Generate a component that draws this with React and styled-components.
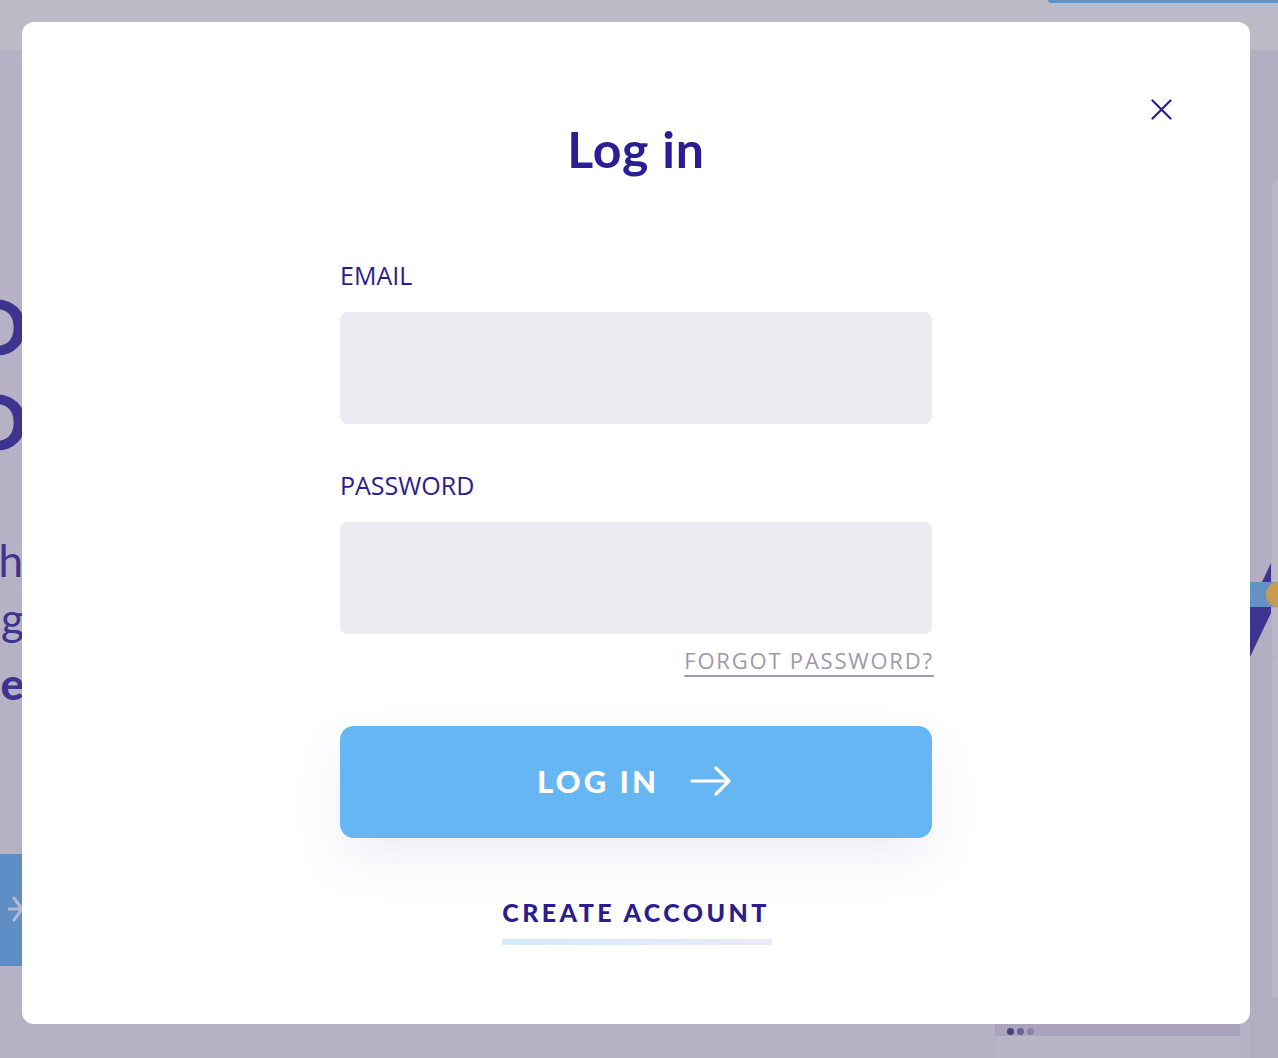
import React from 'react';
import styled, { createGlobalStyle } from 'styled-components';

const GlobalStyle = createGlobalStyle`
  html, body { margin: 0; padding: 0; }
  body {
    width: 1278px;
    height: 1058px;
    overflow: hidden;
    background: #b6b1c4;
    font-family: 'Open Sans', 'Noto Sans', sans-serif;
  }
  * { box-sizing: border-box; }
`;

const Page = styled.div`
  width: 1278px;
  height: 1058px;
  display: flex;
  flex-direction: column;
  background: #b6b1c4;
`;

const Header = styled.header`
  height: 50px;
  flex: none;
  background: #bebbc9;
  display: flex;
  justify-content: flex-end;
`;

const HeaderButton = styled.div`
  width: 230px;
  height: 3px;
  background: #6592c4;
  border-bottom-left-radius: 3px;
`;

const Main = styled.main`
  flex: 1;
  display: flex;
`;

const LeftClip = styled.div`
  width: 22px;
  flex: none;
  overflow: hidden;
  display: flex;
  flex-direction: column;
  align-items: flex-end;
  color: #3f3390;
  font-family: Lato, sans-serif;
`;

const HeroLine = styled.div`
  white-space: nowrap;
  font-size: ${p => p.$size}px;
  font-weight: ${p => p.$weight};
  line-height: ${p => p.$lh}px;
  margin-top: ${p => p.$mt}px;
  margin-right: ${p => p.$mr || 0}px;
`;

const BlueBlock = styled.div`
  margin-top: ${p => p.$mt}px;
  width: 22px;
  height: 112px;
  flex: none;
  background: #5e8ec5;
  display: flex;
  align-items: center;
  justify-content: flex-end;
  overflow: hidden;
`;

const Middle = styled.div`
  flex: 1;
  display: flex;
  flex-direction: column;
  justify-content: flex-end;
  align-items: flex-end;
  padding-right: 10px;
`;

const BottomCard = styled.div`
  width: 245px;
  height: 34px;
  display: flex;
  flex-direction: column;
`;

const CardBand = styled.div`
  height: 12px;
  background: #aba3bc;
  display: flex;
  align-items: flex-end;
  gap: 3px;
  padding-left: 12px;
  padding-bottom: 1px;
`;

const Dot = styled.span`
  width: 7px;
  height: 7px;
  border-radius: 50%;
  background: ${p => p.$c};
`;

const CardBody = styled.div`
  flex: 1;
  background: #b9b4c6;
`;

const RightClip = styled.div`
  width: 28px;
  flex: none;
  display: flex;
  flex-direction: column;
  background: #b4aec3;
`;

const RightCardEdge = styled.div`
  margin-top: ${p => p.$mt}px;
  margin-left: 22px;
  height: ${p => p.$h}px;
  flex: none;
  background: #bbb7c8;
  border-top-left-radius: 8px;
`;

const Stripe = styled.div`
  flex: none;
  height: 94px;
  overflow: hidden;
`;

/* ---------- modal ---------- */
const Modal = styled.div`
  position: fixed;
  top: 22px;
  left: 22px;
  width: 1228px;
  height: 1002px;
  background: #ffffff;
  border-radius: 12px;
  display: flex;
  flex-direction: column;
  align-items: center;
  padding-top: 97px;
`;

const CloseButton = styled.button`
  position: absolute;
  top: 77px;
  right: 78px;
  width: 21px;
  height: 21px;
  padding: 0;
  border: 0;
  background: transparent;
  cursor: pointer;
  display: flex;
  color: #2b1d8f;
`;

const Title = styled.h1`
  margin: 0;
  font-family: Lato, sans-serif;
  font-weight: 700;
  font-size: 50px;
  line-height: 60px;
  color: #2b1d93;
  letter-spacing: 0.8px;
`;

const Form = styled.form`
  width: 592px;
  margin-top: 81px;
  display: flex;
  flex-direction: column;
`;

const Label = styled.label`
  font-family: 'Open Sans', sans-serif;
  font-size: 25px;
  line-height: 30px;
  color: #2b1d8f;
  margin-top: ${p => p.$mt || 0}px;
`;

const Input = styled.input`
  margin-top: 22px;
  height: 112px;
  width: 100%;
  border: 0;
  border-radius: 8px;
  background: #ecebf1;
  padding: 0 24px;
  font-size: 22px;
  font-family: 'Open Sans', sans-serif;
  outline: none;
`;

const ForgotRow = styled.div`
  display: flex;
  justify-content: flex-end;
  margin-top: 13px;
`;

const ForgotLink = styled.a`
  font-family: 'Open Sans', sans-serif;
  font-size: 22px;
  line-height: 26px;
  letter-spacing: 1.8px;
  margin-right: -1.8px;
  color: #9e98ad;
  text-decoration: underline;
  text-decoration-thickness: 2px;
  text-underline-offset: 6px;
  cursor: pointer;
`;

const SubmitButton = styled.button`
  margin-top: 53px;
  height: 112px;
  width: 100%;
  border: 0;
  border-radius: 14px;
  background: #66b6f3;
  color: #ffffff;
  display: flex;
  align-items: center;
  justify-content: center;
  gap: 31px;
  box-shadow: 0 22px 50px rgba(96, 84, 180, 0.1);
  cursor: pointer;
  padding: 0 3px 2px 0;
`;

const ButtonText = styled.span`
  font-family: Lato, sans-serif;
  font-weight: 900;
  font-size: 31px;
  line-height: 36px;
  letter-spacing: 3px;
`;

const CreateWrap = styled.div`
  margin-top: 59px;
  display: flex;
  justify-content: center;
`;

const CreateLink = styled.a`
  display: flex;
  flex-direction: column;
  align-items: stretch;
  gap: 12px;
  font-family: Lato, sans-serif;
  font-weight: 900;
  font-size: 25px;
  line-height: 30px;
  letter-spacing: 3.4px;
  color: #2b1d8f;
  cursor: pointer;
`;

const CreateUnderline = styled.span`
  height: 6px;
  margin-right: -2px;
  background: linear-gradient(to right, #d3ebfb, #ede9fb);
`;

export default function App() {
  return (
    <>
      <GlobalStyle />
      <Page>
        <Header>
          <HeaderButton />
        </Header>
        <Main>
          <LeftClip>
            <HeroLine $size={76} $weight={900} $lh={95} $mt={228} $mr={-6}>GO</HeroLine>
            <HeroLine $size={76} $weight={900} $lh={95} $mt={0} $mr={-6}>DO</HeroLine>
            <HeroLine $size={44} $weight={400} $lh={58} $mt={63} $mr={-1}>wh</HeroLine>
            <HeroLine $size={44} $weight={400} $lh={58} $mt={0} $mr={-2}>g</HeroLine>
            <HeroLine $size={44} $weight={900} $lh={58} $mt={7} $mr={-2}>e</HeroLine>
            <BlueBlock $mt={142}>
              <svg width="14" height="40" viewBox="0 0 14 40">
                <path d="M0 19 H14 M6 8 L14 19 L6 30" stroke="#b9b7cf" strokeWidth="3" fill="none" strokeLinecap="round" />
              </svg>
            </BlueBlock>
          </LeftClip>
          <Middle>
            <BottomCard>
              <CardBand>
                <Dot $c="#4a4078" />
                <Dot $c="#6c6490" />
                <Dot $c="#8b84a6" />
              </CardBand>
              <CardBody />
            </BottomCard>
          </Middle>
          <RightClip>
            <RightCardEdge $mt={130} $h={383} />
            <Stripe>
              <svg width="28" height="94" viewBox="0 0 28 94" style={{ display: 'block' }}>
                <rect x="22" y="0" width="6" height="94" fill="#bbb7c8" />
                <polygon points="21,0 21,50 0,94 0,44" fill="#3f3390" />
                <rect x="0" y="19" width="28" height="25" fill="#6592c4" />
                <circle cx="29" cy="31.5" r="13" fill="#c49c52" />
              </svg>
            </Stripe>
            <RightCardEdge $mt={0} $h={340} />
          </RightClip>
        </Main>
      </Page>

      <Modal role="dialog" aria-label="Log in">
        <CloseButton aria-label="Close">
          <svg width="21" height="21" viewBox="0 0 21 21">
            <path d="M1.5 1.5 L19.5 19.5 M19.5 1.5 L1.5 19.5" stroke="currentColor" strokeWidth="2.2" strokeLinecap="round" />
          </svg>
        </CloseButton>
        <Title>Log in</Title>
        <Form onSubmit={e => e.preventDefault()}>
          <Label htmlFor="email">EMAIL</Label>
          <Input id="email" type="email" />
          <Label htmlFor="password" $mt={46}>PASSWORD</Label>
          <Input id="password" type="password" />
          <ForgotRow>
            <ForgotLink>FORGOT PASSWORD?</ForgotLink>
          </ForgotRow>
          <SubmitButton type="submit">
            <ButtonText>LOG IN</ButtonText>
            <svg width="42" height="30" viewBox="0 0 42 30">
              <path d="M2 15 H39 M26 2 L39 15 L26 28" stroke="#ffffff" strokeWidth="3.2" fill="none" strokeLinecap="round" strokeLinejoin="round" />
            </svg>
          </SubmitButton>
          <CreateWrap>
            <CreateLink>
              CREATE ACCOUNT
              <CreateUnderline />
            </CreateLink>
          </CreateWrap>
        </Form>
      </Modal>
    </>
  );
}
